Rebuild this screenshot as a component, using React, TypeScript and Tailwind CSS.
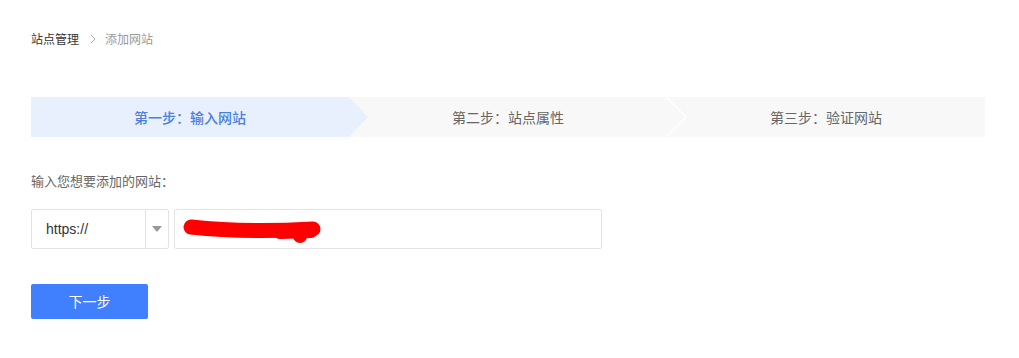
import { useState } from "react";

const font = { fontFamily: '"Noto Sans CJK SC", "Noto Sans", sans-serif' };

const steps = ["第一步：输入网站", "第二步：站点属性", "第三步：验证网站"];

function Steps({ active }: { active: number }) {
  return (
    <div className="flex h-[40px] w-[954px] bg-[#f8f8f8]">
      {steps.map((label, i) => (
        <div
          key={label}
          className={`relative flex flex-1 items-center justify-center text-[14px] ${
            i === active ? "bg-[#e8f0fe] font-medium text-[#4a7fe0]" : "text-[#666]"
          }`}
        >
          {label}
          {i === active && (
            <svg className="absolute -right-[19px] top-0 z-10" width="19" height="40" viewBox="0 0 19 40">
              <path d="M0 0 L19 20 L0 40 Z" fill="#e8f0fe" />
            </svg>
          )}
          {i > active && i < steps.length - 1 && (
            <svg className="absolute -right-[21px] top-0 z-10" width="22" height="40" viewBox="0 0 22 40">
              <path d="M0 0 L20 20 L0 40" fill="none" stroke="#ffffff" strokeWidth="1.5" />
            </svg>
          )}
        </div>
      ))}
    </div>
  );
}

export default function App() {
  const [proto] = useState("https://");

  return (
    <div className="min-h-screen bg-white px-[31px] pt-[30px]" style={font}>
      <div className="flex items-center text-[12px] leading-[17px]">
        <span className="text-[#333]">站点管理</span>
        <svg className="ml-[10px] mr-[8px]" width="8" height="10" viewBox="0 0 8 10">
          <path d="M2 1 L6 5 L2 9" fill="none" stroke="#aaa" strokeWidth="1" />
        </svg>
        <span className="text-[#999]">添加网站</span>
      </div>

      <div className="mt-[50px]">
        <Steps active={0} />
      </div>

      <div className="mt-[35px] text-[13px] leading-[18px] text-[#666]">输入您想要添加的网站：</div>

      <div className="mt-[19px] flex gap-[5px]">
        <div className="flex h-[40px] w-[138px] rounded-[2px] border border-[#e3e3e3]">
          <div
            className="flex flex-1 items-center pl-[14px] text-[14px] text-[#333]"
            style={{ fontFamily: '"Liberation Sans", Arial, sans-serif' }}
          >
            {proto}
          </div>
          <div className="flex w-[23px] items-center justify-center border-l border-[#e3e3e3]">
            <svg width="10" height="6" viewBox="0 0 10 6">
              <path d="M0 0 L10 0 L5 6 Z" fill="#999" />
            </svg>
          </div>
        </div>
        <div className="relative h-[40px] w-[428px] rounded-[2px] border border-[#e3e3e3]">
          <svg className="absolute left-0 top-0" width="160" height="38" viewBox="0 0 160 38">
            <path d="M16 17 Q 70 23 138 19" fill="none" stroke="#ff0000" strokeWidth="15" strokeLinecap="round" />
            <circle cx="125" cy="26" r="7" fill="#ff0000" />
            <path d="M105 23 L136 22" stroke="#ff0000" strokeWidth="12" strokeLinecap="round" />
          </svg>
        </div>
      </div>

      <button className="mt-[35px] h-[35px] w-[117px] rounded-[2px] bg-[#4080ff] text-[14px] text-white">
        下一步
      </button>
    </div>
  );
}
